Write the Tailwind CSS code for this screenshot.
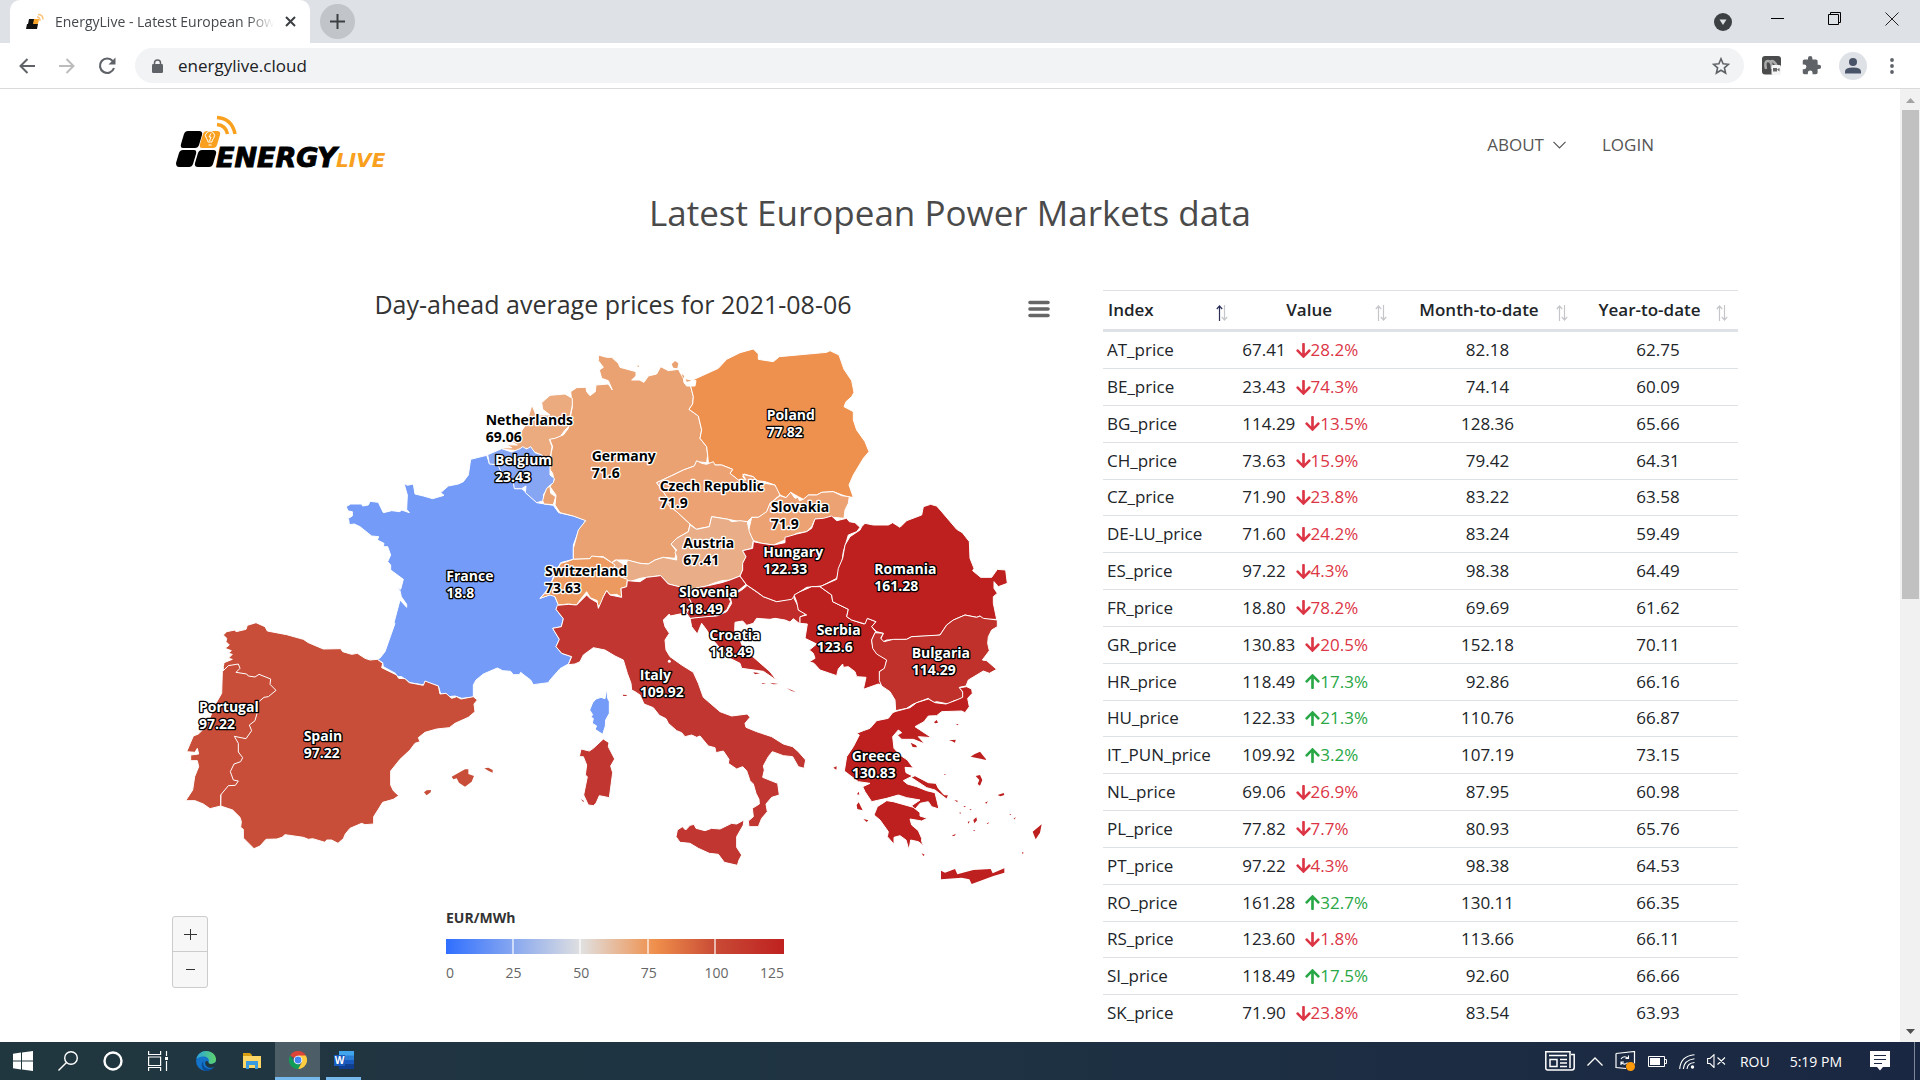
<!DOCTYPE html>
<html lang="en">
  <head>
    <meta charset="UTF-8" />
    <meta name="viewport" content="width=device-width, initial-scale=1.0" />
    <title>EnergyLive - Latest European Power Markets data</title>
    <script src="https://cdn.jsdelivr.net/npm/@tailwindcss/browser@4"></script>
  </head>
  <body
    class="h-screen flex flex-col overflow-hidden bg-white font-['Open_Sans',sans-serif] text-[#212529]"
  >
    <!-- Tab strip -->
    <div class="h-[43px] shrink-0 bg-[#dee1e6] flex items-center pl-[10px]">
      <div class="w-[300px] h-full bg-white rounded-t-[10px] flex items-center pl-4 pr-3">
        <svg class="w-[18px] h-[18px] shrink-0" viewBox="0 0 18 18">
          <path d="M3 6h6l-1 5H2zM1 11h5l-1 5H0zM6 11h6l-1 5H5z" fill="#111" />
          <path d="M8 6h5l-1 5H7z" fill="#f9a42a" />
          <path d="M11 4q3 0 3 4M12 1.500q5 0 5 5" fill="none" stroke="#fbc57a" stroke-width="1.500" />
        </svg>
        <span
          class="ml-[11px] mr-2 flex-1 text-[14px] whitespace-nowrap overflow-hidden [mask-image:linear-gradient(to_right,black_88%,transparent)] text-[#45494d]"
          >EnergyLive - Latest European Power Markets</span
        >
        <button aria-label="Close tab" class="w-4 h-4 shrink-0 flex items-center justify-center">
          <svg class="w-[11px] h-[11px]" viewBox="0 0 11 11">
            <path d="M1 1l9 9M10 1l-9 9" stroke="#3c4043" stroke-width="2" />
          </svg>
        </button>
      </div>
      <button
        aria-label="New tab"
        class="ml-[10px] w-[35px] h-[35px] rounded-full bg-[#c1c4c9] flex items-center justify-center"
      >
        <svg class="w-[15px] h-[15px]" viewBox="0 0 15 15">
          <path d="M7.500 0v15M0 7.500h15" stroke="#3c4043" stroke-width="2" />
        </svg>
      </button>
      <div class="ml-auto flex items-center h-full">
        <button aria-label="Search tabs" class="w-[36px] flex justify-center">
          <svg class="w-[18px] h-[18px]" viewBox="0 0 18 18">
            <circle cx="9" cy="9" r="9" fill="#3c4043" />
            <path d="M5.500 6.500h7L9 12z" fill="#dee1e6" />
          </svg>
        </button>
        <button aria-label="Minimize" class="ml-2 w-[57px] h-[37px] self-start flex items-center justify-center">
          <svg class="w-[13px] h-[13px]" viewBox="0 0 13 13">
            <path d="M0 6.500h13" stroke="#000" />
          </svg>
        </button>
        <button aria-label="Restore" class="w-[57px] h-[37px] self-start flex items-center justify-center">
          <svg class="w-[13px] h-[13px]" viewBox="0 0 13 13">
            <path d="M.5 2.500h10v10H.5zM2.500 2.500v-2h10v10h-2" fill="none" stroke="#000" />
          </svg>
        </button>
        <button aria-label="Close" class="w-[57px] h-[37px] self-start flex items-center justify-center">
          <svg class="w-[14px] h-[14px]" viewBox="0 0 14 14">
            <path d="M.5.5l13 13M13.500.5l-13 13" stroke="#222" />
          </svg>
        </button>
      </div>
    </div>

    <!-- Toolbar -->
    <div class="h-[46px] shrink-0 border-b border-[#d9dadc] flex items-center pl-[7px] pr-[18px]">
      <button aria-label="Back" class="w-10 flex justify-center">
        <svg class="w-4 h-4" viewBox="0 0 16 16" fill="none" stroke="#5f6368" stroke-width="2">
          <path d="M16 8H1.500M8.500 1L1.500 8l7 7" />
        </svg>
      </button>
      <button aria-label="Forward" class="w-10 flex justify-center">
        <svg class="w-4 h-4" viewBox="0 0 16 16" fill="none" stroke="#babcbe" stroke-width="2">
          <path d="M0 8h14.500M7.500 1l7 7-7 7" />
        </svg>
      </button>
      <button aria-label="Reload" class="w-10 flex justify-center">
        <svg class="w-[18px] h-[18px]" viewBox="0 0 18 18">
          <path d="M14.800 4.200A7.200 7.200 0 1 0 16 11" fill="none" stroke="#5f6368" stroke-width="2.100" />
          <path d="M17.500.5v7h-7z" fill="#5f6368" />
        </svg>
      </button>
      <div class="ml-2 flex-1 h-[35px] rounded-full bg-[#f1f3f4] flex items-center pl-[17px] pr-[14px]">
        <svg class="w-[11px] h-[14px]" viewBox="0 0 11 14">
          <path d="M2.500 6V4a3 3 0 0 1 6 0v2" fill="none" stroke="#5f6368" stroke-width="1.500" />
          <rect y="5" width="11" height="9" rx="1.200" fill="#5f6368" />
        </svg>
        <input
          type="text"
          aria-label="Address"
          value="energylive.cloud"
          class="ml-[15px] flex-1 bg-transparent text-[17px] text-[#202124] outline-none"
        />
        <button aria-label="Bookmark this page">
          <svg class="w-[18px] h-[18px]" viewBox="0 0 18 18">
            <path
              d="M9 1.800l2.100 5 5.300.5-4 3.500 1.200 5.200L9 13.300 4.400 16l1.200-5.200-4-3.500 5.300-.5z"
              fill="none"
              stroke="#5f6368"
              stroke-width="1.600"
            />
          </svg>
        </button>
      </div>
      <button aria-label="Recorder extension" class="ml-[18px]">
        <svg class="w-[19px] h-[19px]" viewBox="0 0 19 19">
          <rect width="19" height="18.500" rx="3" fill="#4a4b4c" />
          <path d="M4 13Q2 5 6 5t4 8M8 6q2-2 4 0t3 4" fill="none" stroke="#aaa" stroke-width="2.500" />
          <rect x="9.500" y="9" width="9.500" height="10" rx="1.500" fill="#f5f5f5" />
          <path d="M11 12h4v3.500h-4zM15 13.500l2.500-1.500v3.500z" fill="#666" />
        </svg>
      </button>
      <button aria-label="Extensions" class="ml-[20px]">
        <svg class="w-[21px] h-[21px]" viewBox="0 0 24 24">
          <path
            fill="#5f6368"
            d="M20.500 11H19V7c0-1.100-.9-2-2-2h-4V3.500a2.500 2.500 0 0 0-5 0V5H4c-1.100 0-2 .9-2 2v3.800h1.500a2.700 2.700 0 0 1 0 5.400H2V20c0 1.100.9 2 2 2h3.800v-1.500a2.700 2.700 0 0 1 5.400 0V22H17c1.100 0 2-.9 2-2v-4h1.500a2.500 2.500 0 0 0 0-5z"
          />
        </svg>
      </button>
      <button aria-label="Profile" class="ml-[17px]">
        <svg class="w-7 h-7" viewBox="0 0 28 28">
          <circle cx="14" cy="14" r="14" fill="#dee1e6" />
          <circle cx="14" cy="10" r="4" fill="#4a5468" />
          <path d="M6 21.500v-2q0-4 8-4t8 4v2z" fill="#4a5468" />
        </svg>
      </button>
      <button aria-label="Menu" class="ml-[15px] w-[20px] flex justify-center">
        <svg class="w-1 h-4" viewBox="0 0 4 16" fill="#5f6368">
          <circle cx="2" cy="2" r="1.900" />
          <circle cx="2" cy="8" r="1.900" />
          <circle cx="2" cy="14" r="1.900" />
        </svg>
      </button>
    </div>

    <div class="flex-1 min-h-0 flex">
      <main class="flex-1 min-w-0 overflow-hidden">
        <div class="max-w-[1576px] mx-auto">
          <header class="flex items-center justify-between pt-[25px] pl-[14px] pr-[84px]">
            <a href="#" aria-label="EnergyLive home">
              <svg class="w-[216px] h-[56px]" viewBox="0 0 216 56">
                <g fill="#000">
                  <path d="M12 17h11q4 0 3 4l-3 10q-1 3-4 3H7q-3 0-2-4l3-10q1-3 4-3z" />
                  <path d="M7 36h11q3 0 2 4l-3 10q-1 3-4 3H3q-3 0-3-4l3-10q1-3 4-3z" />
                  <path d="M26 36h11q4 0 3 4l-3 10q-1 3-4 3H22q-4 0-3-4l3-10q1-3 4-3z" />
                </g>
                <path d="M31 17h10q4 0 3 4l-3 10q-1 3-4 3H26q-3 0-2-4l3-10q1-3 4-3z" fill="#f9a11f" />
                <path
                  d="M32 28q0-2-1.500-3.500a4.500 4.500 0 1 1 7 0Q36 26 36 28zM32.500 31h3M35 19.500l-2 3.500h2l-1.500 4"
                  fill="none"
                  stroke="#fff"
                  stroke-width="1"
                />
                <path d="M41 3.500q15 1 18 16.500M41 10.500q9 1 10.500 9.500" fill="none" stroke="#f9a11f" stroke-width="3.500" />
                <text x="40" y="53" class="font-['DejaVu_Sans'] font-bold italic text-[27px]" stroke="#000">ENERGY</text>
                <text x="160" y="53" fill="#f9a11f" class="font-['DejaVu_Sans'] font-bold italic text-[20px]">LIVE</text>
              </svg>
            </a>
            <nav class="pt-[6px] flex items-center gap-[36px] text-[17px] leading-6 font-medium text-[#555]">
              <a href="#" class="flex items-center gap-[9px]"
                >ABOUT
                <svg class="w-[13px] h-2" viewBox="0 0 13 8">
                  <path d="M.5.8l6 6 6-6" fill="none" stroke="#555" stroke-width="1.200" />
                </svg>
              </a>
              <a href="#">LOGIN</a>
            </nav>
          </header>

          <h1 class="mt-[19px] text-center text-[35px] leading-[48px] text-[#4a4a4a]">
            Latest European Power Markets data
          </h1>

          <div class="mt-[53px] grid grid-cols-[906fr_635fr] gap-[35px]">
            <section class="pb-8">
              <div class="flex items-start">
                <h2 class="flex-1 pl-[36px] text-center text-[25px] leading-[28px] text-[#333]">
                  Day-ahead average prices for 2021-08-06
                </h2>
                <button aria-label="Chart context menu" class="mr-[18px] mt-[10px]">
                  <svg class="w-[22px] h-[18px]" viewBox="0 0 22 18">
                    <path d="M2 2.500h18M2 9h18M2 15.500h18" stroke="#666" stroke-width="3.600" stroke-linecap="round" />
                  </svg>
                </button>
              </div>

              <svg id="map" class="mt-3 w-full" viewBox="6 0 2718 1710" role="img" aria-label="Day-ahead prices by country">
                <g stroke="#fff" stroke-width="3" stroke-linejoin="round">
                  <!-- France, Corsica -->
                  <path fill="#739bf7" transform="translate(480 150)" d="M452 238L500 226 508 250 535 256 560 290 585 310 585 326 605 326 616 335 650 368 700 376 716 398 760 408 798 420 775 455 760 495 760 538 722 548 700 590 690 620 660 655 700 640 716 676 708 688 730 716 724 740 698 745 718 778 708 800 725 820 755 830 745 852 720 866 690 900 685 908 640 914 632 900 612 885 602 877 598 884 580 884 572 874 548 872 532 864 490 882 468 900 460 915 460 952 425 955 405 948 385 950 380 942 362 942 355 918 315 905 312 915 270 908 245 890 232 890 226 880 190 860 188 848 172 838 180 834 195 815 225 730 222 728 240 660 260 682 260 673 244 650 240 632 232 622 242 628 250 598 212 570 212 555 203 545 212 525 203 500 190 500 192 490 172 480 176 470 155 468 120 440 103 432 88 434 86 418 80 418 97 408 97 395 85 393 78 380 92 372 125 372 128 378 145 375 150 364 175 367 190 398 215 392 240 395 245 390 268 398 260 388 262 345 252 310 262 316 280 312 285 342 310 348 338 356 372 346 362 338 385 318 415 312 430 305 445 285Z" />
                  <path fill="#739bf7" transform="translate(1140 930)" d="M200 146L203 175 208 185 208 220 197 240 196 258 188 283 165 268 170 258 157 250 160 235 152 232 158 224 149 210 158 188 168 177 183 172 195 176Z" />
                  <!-- Spain, Portugal -->
                  <path fill="#c84e39" transform="translate(0 810)" d="M190 105L200 95 225 90 228 95 258 88 262 76 288 68 315 80 322 93 380 104 430 118 445 128 490 147 542 146 548 155 575 163 592 160 615 175 630 180 652 178 668 190 665 203 710 225 716 235 735 236 748 248 790 256 795 243 835 258 840 282 858 280 875 295 890 290 903 297 940 290 952 300 942 312 945 335 925 352 885 370 868 383 830 387 795 397 775 413 780 425 765 430 750 450 720 478 692 513 692 555 700 572 716 587 700 598 668 607 655 628 641 650 641 672 615 674 605 670 570 685 556 702 550 716 534 730 515 720 500 720 495 727 458 716 445 718 430 712 375 704 366 712 350 717 318 718 300 738 282 746 250 714 250 688 242 682 244 665 240 652 218 630 182 618 190 200 192 188 217 178 205 175 217 163 205 160 214 152 195 145 208 135 198 125 200 115Z" />
                  <path fill="#c84e39" transform="translate(0 810)" d="M187 215L205 197 235 192 240 205 228 217 260 222 265 228 285 231 297 223 332 237 330 253 348 271 325 290 312 292 293 308 291 340 285 362 268 375 275 392 258 416 223 409 235 430 235 456 248 473 242 485 222 492 211 515 220 540 235 543 226 556 205 557 182 585 182 618 150 626 130 612 105 602 77 602 98 570 104 530 116 500 112 482 92 482 92 465 116 462 112 445 105 457 80 455 100 408 115 402 140 378 165 315 185 280Z" />
                  <!-- Germany -->
                  <path fill="#eba272" transform="translate(1140 0)" d="M175 75L200 82 215 82 235 100 240 112 288 125 288 138 275 150 298 150 312 157 325 138 350 132 362 110 385 122 415 118 430 145 432 158 440 168 452 168 460 200 458 222 447 238 475 258 485 300 480 325 500 350 503 375 500 398 470 395 463 408 430 420 395 437 350 458 380 500 385 525 410 545 450 582 445 605 410 625 393 642 410 665 405 685 370 682 345 690 325 702 300 700 260 690 225 690 215 698 190 680 155 680 150 686 100 688 100 655 115 600 137 572 100 558 60 548 45 525 48 495 30 470 42 450 38 430 25 412 33 395 33 370 38 350 28 325 48 322 70 315 85 295 97 230 92 185 110 173 138 172 140 185 150 197 166 185 168 165 205 162 217 180 212 168 205 152 185 145 178 120 190 112 175 92Z" />
                  <!-- Netherlands, Belgium, Luxembourg -->
                  <path fill="#ecaa7f" transform="translate(480 150)" d="M625 110L636 75 648 105 690 105 668 88 665 68 690 46 735 42 757 55 757 75 750 110 746 140 735 150 722 168 705 175 688 178 696 200 692 225 685 235 692 262 668 262 665 225 640 215 620 205 590 212 550 208 548 204 575 203 560 194 592 195 578 188 600 160 620 130Z" />
                  <path fill="#86a6f4" transform="translate(480 150)" d="M503 224L545 206 575 216 600 206 608 200 620 207 632 200 645 218 665 225 682 240 690 262 690 285 703 295 700 308 685 320 670 345 672 362 650 368 616 338 618 318 605 326 583 326 580 308 550 290 537 262 535 254 508 252Z" />
                  <path fill="#eba272" transform="translate(480 150)" d="M672 345L680 325 690 318 692 340 707 350 700 374 672 372 668 362Z" />
                  <!-- Poland, Czech Republic, Slovakia, Austria, Switzerland -->
                  <path fill="#ee914f" transform="translate(1140 0)" d="M458 150L535 115 560 88 600 68 640 57 655 72 655 88 700 95 718 80 860 67 870 62 897 75 912 118 935 152 942 187 935 200 918 215 912 230 940 245 940 270 950 300 975 335 987 365 970 385 940 435 927 465 940 502 920 500 880 485 845 487 830 495 805 495 790 508 775 500 752 487 738 503 720 495 707 478 705 465 675 455 650 452 640 440 612 432 608 440 618 452 600 455 570 430 578 418 545 405 520 405 505 398 503 375 500 350 480 325 485 300 475 258 447 238 458 222 460 200 452 168 465 168 468 152Z" />
                  <path fill="#eca273" transform="translate(1140 0)" d="M350 458L395 437 430 420 463 408 470 392 485 400 500 403 520 395 525 405 545 405 578 418 570 430 595 450 618 450 608 433 640 440 650 452 675 460 705 465 720 495 690 520 680 548 655 562 635 562 622 575 600 575 565 568 515 560 508 590 480 595 470 598 450 582 410 545 385 525 380 500Z" />
                  <path fill="#eca273" transform="translate(1140 0)" d="M720 497L738 503 752 487 765 505 775 502 778 512 790 508 805 495 830 495 845 487 880 485 905 497 928 500 925 520 915 540 912 565 880 562 870 565 825 567 815 590 800 605 770 610 735 630 700 645 665 640 640 632 625 605 632 575 635 562 655 562 680 545 690 520Z" />
                  <path fill="#e9ae87" transform="translate(1140 0)" d="M450 585L470 598 508 590 515 560 565 568 575 575 600 572 622 575 628 605 640 632 635 655 608 662 618 680 608 700 608 720 600 738 570 750 545 752 520 760 500 768 450 778 385 762 362 737 320 742 300 745 270 755 240 745 218 715 215 698 230 690 245 700 258 710 262 690 300 700 325 702 345 690 370 682 410 690 410 680 405 668 410 660 393 642 410 625 445 605Z" />
                  <path fill="#ed9a61" transform="translate(1140 0)" d="M62 700L80 695 100 688 150 686 155 678 190 682 215 698 225 705 220 718 240 740 262 748 260 770 243 775 245 802 230 793 210 795 200 782 190 800 182 832 172 825 172 812 150 803 140 785 120 810 110 825 85 822 55 825 45 800 30 795 0 805 15 790 30 765 45 735Z" />
                  <!-- Italy, Sardinia, Sicily -->
                  <path fill="#c13630" transform="translate(1140 930)" d="M85 74L95 50 65 40 48 20 58 -2 38 -35 64 -40 70 -64 48 -92 52 -104 85 -107 110 -105 140 -135 150 -125 172 -112 175 -95 190 -130 200 -148 210 -135 245 -128 243 -155 260 -160 262 -178 300 -175 320 -188 362 -193 385 -168 450 -152 440 -140 455 -110 440 -90 450 -75 430 -80 390 -72 388 -78 370 -60 375 -40 388 -20 375 0 378 30 390 50 425 75 460 97 475 130 490 172 540 215 575 228 622 222 630 232 615 250 618 262 650 275 695 290 730 312 758 320 775 335 797 360 792 385 775 380 758 350 730 347 697 335 685 350 670 378 673 390 668 412 713 430 718 465 695 472 678 492 682 515 665 535 655 560 627 560 625 543 640 530 637 505 658 492 657 478 648 460 640 432 630 422 620 392 608 380 590 387 565 370 567 358 550 333 528 338 525 323 505 318 480 288 470 292 455 285 435 290 425 278 410 272 385 250 378 236 358 226 340 203 312 192 300 165 285 155 275 150 273 130 262 100 250 60 225 48 195 30 160 23 130 45 120 65 105 72Z" />
                  <path fill="#c13630" transform="translate(1140 930)" d="M190 297L207 308 205 320 224 357 212 378 218 398 208 473 178 467 168 490 160 497 145 495 131 465 142 410 136 405 140 375 130 350 118 350 123 327 148 333 160 325Z" />
                  <path fill="#c13630" transform="translate(1140 930)" d="M408 590L412 570 427 560 437 570 450 556 462 553 468 565 495 572 515 565 540 567 575 550 590 552 612 540 610 555 590 590 590 622 605 645 597 660 592 676 553 667 535 643 508 640 475 625 450 610 420 607Z" />
                  <!-- Slovenia, Croatia, Hungary -->
                  <path fill="#bf2c29" transform="translate(1140 0)" d="M600 738L620 765 670 800 710 815 755 805 765 790 762 805 775 830 775 840 798 852 780 862 780 882 760 866 750 876 735 870 705 865 690 868 650 865 640 880 620 886 608 873 585 877 584 905 600 930 610 955 650 990 690 1025 710 1051 670 1024 605 1015 600 1000 570 985 540 955 515 925 500 900 485 880 472 912 455 890 450 865 480 860 530 858 560 845 575 820 570 800 605 780 620 768Z" />
                  <path fill="#bf2c29" transform="translate(1140 0)" d="M450 778L500 768 545 758 570 750 600 738 618 763 600 778 565 800 572 815 560 840 545 850 520 858 480 862 450 865 440 850 455 820 440 790Z" />
                  <path fill="#be2321" transform="translate(1140 0)" d="M640 635L665 640 700 645 735 638 735 622 770 612 800 605 815 595 825 567 850 565 875 558 890 572 920 565 928 575 945 578 960 592 950 605 925 615 910 665 905 700 890 745 845 768 800 772 765 795 755 808 710 815 670 800 650 785 620 765 600 738 608 720 608 700 618 680 608 662 638 655Z" />
                  <!-- Serbia, Romania, Bulgaria -->
                  <path fill="#bd211f" transform="translate(1680 450)" d="M222 345L240 335 275 320 300 320 335 345 338 365 385 388 380 410 395 420 432 432 442 415 468 425 455 440 467 455 455 480 458 500 500 540 495 565 478 575 485 615 475 612 430 628 438 592 410 590 405 575 385 560 370 562 368 552 355 567 350 587 300 570 282 550 268 545 285 535 280 520 268 510 290 492 255 475 262 432 240 430 240 410 260 405 235 390 230 365Z" />
                  <path fill="#bd201e" transform="translate(1680 450)" d="M425 140L435 130 460 135 505 135 518 128 540 142 560 122 605 105 610 80 632 73 650 78 665 95 710 148 727 158 748 185 750 235 762 265 758 272 782 292 815 292 832 268 857 270 862 310 835 320 822 305 822 325 832 340 820 350 820 370 830 418 790 418 780 408 770 412 735 405 700 420 680 435 660 465 640 468 575 470 560 478 500 480 490 485 482 478 490 460 470 455 455 440 468 425 442 415 435 432 395 420 380 410 385 388 338 365 335 345 300 320 350 298 355 265 368 235 375 195 390 170 420 150Z" />
                  <path fill="#c1312b" transform="translate(1680 450)" d="M490 460L482 475 492 485 520 478 560 478 575 470 660 465 680 435 700 420 735 405 770 412 780 408 790 415 832 420 832 440 815 450 805 470 803 490 808 512 787 540 800 542 830 568 808 580 790 573 745 600 738 618 718 622 730 640 728 655 700 663 685 672 650 665 640 668 625 655 580 672 560 685 527 692 525 660 510 635 485 618 478 602 478 575 493 565 500 540 470 522 458 505 455 480 465 458Z" />
                  <!-- Greece, Euboea, Peloponnese, Crete -->
                  <path fill="#bd201e" transform="translate(1980 930)" d="M218 218L228 214 270 203 290 188 325 177 345 188 378 192 410 180 428 172 428 155 418 143 440 140 455 147 457 160 443 175 448 200 435 218 425 213 365 215 350 227 325 228 312 245 285 260 335 293 295 290 315 312 280 298 245 298 232 285 245 278 235 270 218 290 222 325 240 345 262 360 280 384 255 382 258 398 278 408 250 422 262 432 290 440 320 452 345 458 357 507 335 500 325 485 300 490 285 508 275 497 300 480 260 473 235 465 200 475 155 485 135 455 128 440 150 430 115 425 73 393 80 350 100 320 118 285 110 280 130 272 150 265 170 242 205 235Z" />
                  <path fill="#bd201e" transform="translate(1980 930)" d="M200 482L220 485 280 502 300 518 300 528 322 535 305 543 270 537 275 555 295 572 305 595 305 605 312 618 295 605 272 600 267 630 258 600 240 587 222 592 222 613 202 590 205 575 180 540 162 525 172 500Z" />
                  <path fill="#bd201e" transform="translate(1980 930)" d="M273 412L285 407 325 428 348 430 355 445 372 464 386 465 380 477 345 450 320 443Z" />
                </g>
                <!-- Small islands, drawn without an outline -->
                <path fill="#c84e39" transform="translate(0 810)" d="M875 530L915 508 925 508 925 522 942 528 935 545 915 560 897 548 890 535 880 538ZM973 505L985 503 998 510 998 518 985 512ZM792 577L800 571 813 570 812 577 800 586Z" />
                <path fill="#eba272" transform="translate(1140 0)" d="M395 103L405 93 415 100 412 115 400 113ZM425 132L433 138 430 145ZM437 148L455 152 440 155ZM292 106L298 108 294 112Z" />
                <path fill="#bf2c29" transform="translate(1140 930)" d="M640 97L660 100 645 103ZM740 144L768 156 755 153ZM665 129L678 130 668 132ZM690 128L715 132 700 133ZM498 -50L512 -42 520 -28 508 -34Z" />
                <path fill="#c13630" transform="translate(1140 930)" d="M248 164L262 165 258 168 250 168ZM122 477L132 483 130 486Z" />
                <circle cx="1528" cy="994" r="4.500" fill="#fff" />
                <path fill="#bd201e" transform="translate(1980 930)" d="M363 692L375 698 405 687 412 703 460 690 512 687 518 700 553 685 553 698 520 708 455 732 448 718 425 713 363 718ZM452 350L463 343 480 335 500 360ZM467 408L480 405 487 420 480 437 473 432 478 420ZM638 575L665 553 660 578 647 598ZM387 301L407 299 405 308 397 304ZM342 247L350 240 354 248 346 250ZM272 308L288 316 291 322 278 321ZM533 465L551 459 553 465 541 469ZM40 383L50 379 49 389ZM110 495L116 487 128 511 112 507ZM130 537L145 541 140 546ZM460 540L469 532 471 541 463 550ZM395 587L408 581 403 588ZM403 480L413 482 412 487ZM111 463L116 455 118 464ZM305 640L314 644 310 648ZM495 488L504 484 499 491ZM443 546L449 543 446 551ZM408 252L416 253 412 256ZM460 570L466 571 462 574ZM418 518L422 517 421 523ZM430 498L438 499 434 502ZM448 508L455 508 452 511ZM580 537L588 531 584 538ZM500 551L507 546 504 552ZM606 636L611 638 608 643ZM372 402L378 403 374 405ZM568 523L574 523 571 526Z" />
                <g
                  id="labels"
                  class="font-['Open_Sans'] font-bold text-[42px]"
                  stroke-width="8"
                  stroke-linejoin="round"
                  paint-order="stroke"
                ></g>
              </svg>

              <div class="mt-2 flex items-end pl-[10px]">
                <div class="flex flex-col border border-[#ccc] rounded-[3px] bg-[#f7f7f7] divide-y divide-[#ccc] mb-[11px]">
                  <button aria-label="Zoom in" class="w-[34px] h-[35px] flex items-center justify-center">
                    <svg class="w-[13px] h-[13px]" viewBox="0 0 13 13"><path d="M6.500 1v11M0 6.500h13" stroke="#333" /></svg>
                  </button>
                  <button aria-label="Zoom out" class="w-[34px] h-[35px] flex items-center justify-center">
                    <svg class="w-[13px] h-[13px]" viewBox="0 0 13 13"><path d="M2 6.500h9" stroke="#333" /></svg>
                  </button>
                </div>
                <div class="ml-[238px] w-[338px] mb-[16px]">
                  <h3 class="text-[14px] leading-5 font-bold text-[#333]">EUR/MWh</h3>
                  <div
                    class="mt-[11px] h-[15px] grid grid-cols-5 divide-x-2 divide-white/60 bg-[linear-gradient(to_right,#2f6fff,#e0e0e0_40%,#ef8f4b_62%,#c84a35_80%,#bf2120)]"
                  >
                    <div></div>
                    <div></div>
                    <div></div>
                    <div></div>
                    <div></div>
                  </div>
                  <div class="mt-[9px] grid grid-cols-5 text-[14px] leading-5 text-[#666]">
                    <span class="flex justify-between"><span>0</span><span class="-mr-2">25</span></span>
                    <span class="text-right -mr-2">50</span>
                    <span class="text-right -mr-2">75</span>
                    <span class="text-right -mr-3">100</span>
                    <span class="text-right">125</span>
                  </div>
                </div>
              </div>
            </section>

            <table class="w-full h-full table-fixed border-collapse text-[17px] leading-5">
              <colgroup>
                <col class="w-[21.3%]" />
                <col class="w-[25%]" />
                <col class="w-[28.500%]" />
                <col class="w-[25.200%]" />
              </colgroup>
              <thead>
                <tr id="headings" class="border-t border-b-[3px] border-[#dee2e6]"></tr>
              </thead>
              <tbody id="prices"></tbody>
            </table>
          </div>
        </div>
      </main>

      <!-- Page scrollbar -->
      <div class="w-5 shrink-0 bg-[#f1f1f1] flex flex-col items-center">
        <svg class="w-[9px] h-[21px]" viewBox="0 0 9 21"><path d="M0 14l4.500-5L9 14z" fill="#a3a3a3" /></svg>
        <div class="w-[17px] h-[489px] bg-[#c1c1c1]"></div>
        <svg class="w-[9px] h-[21px] mt-auto" viewBox="0 0 9 21"><path d="M0 8l4.500 5L9 8z" fill="#505050" /></svg>
      </div>
    </div>

    <!-- Taskbar -->
    <footer
      class="h-[38px] shrink-0 flex items-center bg-linear-to-r from-[#21373f] via-[#1e3243] to-[#1a2742] text-white"
    >
      <button aria-label="Start" class="w-[45px] flex justify-center">
        <svg class="w-5 h-5" viewBox="0 0 20 20" fill="#fff">
          <path d="M0 2.700l8-1.100v7.900H0zM9 1.400L20 0v9.500H9zM0 10.500h8v7.900l-8-1.100zM9 10.500h11V20L9 18.600z" />
        </svg>
      </button>
      <button aria-label="Search" class="w-[45px] flex justify-center">
        <svg class="w-5 h-5" viewBox="0 0 20 20" fill="none" stroke="#fff" stroke-width="1.400">
          <circle cx="13" cy="7" r="6.300" />
          <path d="M8.500 11.500L.5 19.500" />
        </svg>
      </button>
      <button aria-label="Cortana" class="w-[45px] flex justify-center">
        <svg class="w-5 h-5" viewBox="0 0 20 20"><circle cx="10" cy="10" r="8.500" fill="none" stroke="#fff" stroke-width="2.400" /></svg>
      </button>
      <button aria-label="Task View" class="w-[45px] flex justify-center">
        <svg class="w-5 h-5" viewBox="0 0 20 20" fill="none" stroke="#fff" stroke-width="1.200">
          <path d="M.6 0v3.500h12V0M.6 20v-3.500h12V20M.6 6h12v8.500H.6zM18.500 0v5M18.500 10v10" />
          <path d="M17 6h3v3h-3z" fill="#fff" stroke="none" />
        </svg>
      </button>
      <button aria-label="Microsoft Edge" class="ml-[3px] w-[46px] flex justify-center">
        <svg class="w-5 h-5" viewBox="0 0 20 20">
          <defs>
            <linearGradient id="edge-top"><stop stop-color="#2ba3dd" /><stop offset="1" stop-color="#5fd46a" /></linearGradient>
          </defs>
          <circle cx="10" cy="10" r="10" fill="#1273c8" />
          <path d="M.3 8C1.500 3 5.500 0 10 0c6 0 10 4 10 8.500 0 3-2.300 4.500-5 4.500-2 0-3-.8-2.500-1.800C14 8 11 5.500 7.500 5.500 4 5.500 1 7 .3 8z" fill="url(#edge-top)" />
          <path d="M7.500 10c-1.500 4 1.500 8 6 8 2 0 3.700-.7 4.700-1.700C16 19 13 20 10.500 20 6 19.500 4 13 7.500 10z" fill="#0b4a94" />
          <path d="M12.500 11c-.4 1 .6 2 2.500 2 2 0 4-1 5-2.500 0 2-.5 4-1.600 5.300-4 2.500-9.400.2-9.200-4 .2-2 1.700-2.500 3.300-.8z" fill="#21373f" />
        </svg>
      </button>
      <button aria-label="File Explorer" class="w-[46px] flex justify-center">
        <svg class="w-[18px] h-4" viewBox="0 0 18 16">
          <path d="M0 0h7l2 2v3H0z" fill="#d99f12" />
          <path d="M0 3h18v12H0z" fill="#ffd767" />
          <path d="M3 16V8h12v8h-3v-4H6v4z" fill="#3b9be0" />
        </svg>
      </button>
      <button
        aria-label="Google Chrome"
        class="w-[45px] h-full border-b-[3px] border-[#76b9ed] bg-white/20 flex items-center justify-center"
      >
        <svg class="w-[18px] h-[18px]" viewBox="0 0 18 18">
          <path d="M9 9L1.200 4.500A9 9 0 0 1 16.800 4.500z" fill="#db4437" />
          <path d="M9 4.500h7.800A9 9 0 0 1 9 18l4-7z" fill="#ffcd40" />
          <path d="M1.200 4.500L5 11.200 9 13.500h2.500L9 18A9 9 0 0 1 1.200 4.500z" fill="#0f9d58" />
          <circle cx="9" cy="9" r="4.300" fill="#fff" />
          <circle cx="9" cy="9" r="3.400" fill="#4285f4" />
        </svg>
      </button>
      <button
        aria-label="Word"
        class="ml-[6px] w-[35px] h-full border-b-[3px] border-[#76b9ed] flex items-center justify-center"
      >
        <svg class="w-5 h-[18px]" viewBox="0 0 20 18">
          <path d="M5 0h15v5H5z" fill="#41a5ee" />
          <path d="M5 4.500h15V9H5z" fill="#2b7cd3" />
          <path d="M5 9h15v4.500H5z" fill="#185abd" />
          <path d="M5 13.500h15V18H5z" fill="#103f91" />
          <path d="M0 4h11v11H0z" fill="#185abd" />
          <text x="5.500" y="13" text-anchor="middle" fill="#fff" class="font-['Open_Sans'] font-bold text-[10px]">W</text>
        </svg>
      </button>

      <div class="ml-auto flex items-center gap-3 pr-[5px] text-[14px]">
        <button aria-label="News and interests">
          <svg class="w-[30px] h-5" viewBox="0 0 30 20" fill="none" stroke="#fff" stroke-width="1.500">
            <path d="M25 17V.8H.8V17q0 2 2 2h24q2.400 0 2.400-2.500V3.500H26" />
            <path d="M4 4.500h18M15 8.500h7M15 12h7M15 15.500h7M5 8.500h7v7H5z" />
          </svg>
        </button>
        <button aria-label="Show hidden icons">
          <svg class="w-4 h-[9px]" viewBox="0 0 16 9"><path d="M.5 8.500L8 1l7.500 7.500" fill="none" stroke="#fff" stroke-width="1.300" /></svg>
        </button>
        <button aria-label="Windows Update">
          <svg class="w-[21px] h-5" viewBox="0 0 21 20" fill="none" stroke="#fff">
            <path d="M1 2.500L19.500.5v12M11 17.500L1 16.500v-14" stroke-width="1.200" />
            <path d="M6 8q2-3.500 6-1.500l1.500 1M13.500 4.500v3h-3M12.500 11.500q-2 2.500-5 1l-1.500-1M6 14v-3h3" stroke-width="1.100" />
            <circle cx="15.500" cy="15.500" r="4.500" fill="#ff9a0a" stroke="none" />
          </svg>
        </button>
        <button aria-label="Battery">
          <svg class="w-[19px] h-[11px]" viewBox="0 0 19 11">
            <path d="M.5.5h16v10H.5zM16.500 3.500h2v4h-2" fill="none" stroke="#fff" />
            <path d="M2 2h10v7H2z" fill="#fff" />
          </svg>
        </button>
        <button aria-label="Network">
          <svg class="w-4 h-[15px]" viewBox="0 0 16 15" fill="none" stroke="#fff" stroke-width="1.100">
            <path d="M.7 15Q1.500 2 15.500.7M4.300 15Q5 6 15.500 4.700M8 15q.5-6 7.500-6.500" />
            <circle cx="13.500" cy="13" r="1.700" fill="#fff" stroke="none" />
          </svg>
        </button>
        <button aria-label="Volume muted">
          <svg class="w-[19px] h-[14px]" viewBox="0 0 19 14" fill="none" stroke="#fff" stroke-width="1.100">
            <path d="M.6 4.500v5H3l4 4V.7l-4 3.800zM10.500 3.500l7.500 7M18 3.500l-7.500 7" />
          </svg>
        </button>
        <span class="ml-[2px]">ROU</span>
        <span class="ml-2">5:19 PM</span>
        <button aria-label="Notifications" class="ml-4">
          <svg class="w-5 h-5" viewBox="0 0 20 20">
            <path d="M0 0h20v16h-7l-3 3.500L7 16H0z" fill="#fff" />
            <path d="M4 4.500h12M4 8.500h12M4 12.500h8" stroke="#1a2742" stroke-width="1.100" />
          </svg>
        </button>
        <span class="ml-3 w-px h-[38px] bg-[#7d8797]"></span>
      </div>
    </footer>

    <script>
      const headings = ["Index", "Value", "Month-to-date", "Year-to-date"];

      // index, value, change in %, month-to-date, year-to-date
      const prices = [
        ["AT_price", "67.41", -28.2, "82.18", "62.75"],
        ["BE_price", "23.43", -74.3, "74.14", "60.09"],
        ["BG_price", "114.29", -13.5, "128.36", "65.66"],
        ["CH_price", "73.63", -15.9, "79.42", "64.31"],
        ["CZ_price", "71.90", -23.8, "83.22", "63.58"],
        ["DE-LU_price", "71.60", -24.2, "83.24", "59.49"],
        ["ES_price", "97.22", -4.3, "98.38", "64.49"],
        ["FR_price", "18.80", -78.2, "69.69", "61.62"],
        ["GR_price", "130.83", -20.5, "152.18", "70.11"],
        ["HR_price", "118.49", 17.3, "92.86", "66.16"],
        ["HU_price", "122.33", 21.3, "110.76", "66.87"],
        ["IT_PUN_price", "109.92", 3.2, "107.19", "73.15"],
        ["NL_price", "69.06", -26.9, "87.95", "60.98"],
        ["PL_price", "77.82", -7.7, "80.93", "65.76"],
        ["PT_price", "97.22", -4.3, "98.38", "64.53"],
        ["RO_price", "161.28", 32.7, "130.11", "66.35"],
        ["RS_price", "123.60", -1.8, "113.66", "66.11"],
        ["SI_price", "118.49", 17.5, "92.60", "66.66"],
        ["SK_price", "71.90", -23.8, "83.54", "63.93"],
      ];

      // name, value, x, y, dark text
      const labels = [
        ["Portugal", "97.22", 117, 1147],
        ["Spain", "97.22", 431, 1234],
        ["Netherlands", "69.06", 977, 286, true],
        ["Belgium", "23.43", 1005, 406],
        ["France", "18.8", 859, 754],
        ["Italy", "109.92", 1439, 1050],
        ["Switzerland", "73.63", 1155, 739, true],
        ["Germany", "71.6", 1295, 394, true],
        ["Poland", "77.82", 1820, 271],
        ["Czech Republic", "71.9", 1499, 484, true],
        ["Slovakia", "71.9", 1832, 545, true],
        ["Austria", "67.41", 1570, 655, true],
        ["Hungary", "122.33", 1810, 682],
        ["Slovenia", "118.49", 1557, 801],
        ["Croatia", "118.49", 1648, 931],
        ["Serbia", "123.6", 1970, 916],
        ["Romania", "161.28", 2143, 731],
        ["Bulgaria", "114.29", 2255, 983],
        ["Greece", "130.83", 2075, 1294],
      ];

      const arrow = (up) => `
        <svg class="${up ? "w-[15px] h-[17px] rotate-180" : "w-[15px] h-[17px]"}" viewBox="0 0 448 512" fill="currentColor">
          <path d="M413.100 222.500l22.200 22.200c9.400 9.400 9.400 24.600 0 33.900L241 473c-9.400 9.400-24.600 9.400-33.900 0L12.700 278.600c-9.400-9.400-9.400-24.600 0-33.900l22.200-22.200c9.500-9.500 25-9.300 34.300.4L184 343.400V56c0-13.300 10.700-24 24-24h32c13.300 0 24 10.700 24 24v287.400l114.800-120.500c9.300-9.800 24.800-10 34.300-.4z"/>
        </svg>`;

      document.getElementById("headings").innerHTML = headings
        .map(
          (title, i) => `
          <th class="p-0 font-semibold">
            <button class="w-full h-[38px] flex items-center pl-[5px] pr-[10px]">
              <span class="${i === 0 ? "flex-1 text-left" : "flex-1 text-center"}">${title}</span>
              <svg class="w-3 h-4 mt-[6px]" viewBox="0 0 12 16" fill="none">
                <path d="M3.500 16V1M.8 4l2.700-3 2.700 3" stroke="${i === 0 ? "#2b2f5a" : "#c4c6c9"}" stroke-width="1.200" />
                <path d="M8.500 0v15M5.800 12l2.700 3 2.700-3" stroke="#c4c6c9" stroke-width="1.200" />
              </svg>
            </button>
          </th>`
        )
        .join("");

      document.getElementById("prices").innerHTML = prices
        .map(
          ([index, value, change, month, year]) => `
          <tr class="border-b border-[#dee2e6] last:border-0">
            <td class="py-1 pl-1">${index}</td>
            <td class="py-1 pl-1">
              <div class="flex items-center gap-[10px]">
                <span>${value}</span>
                <span class="${change > 0 ? "flex items-center text-[#28a745]" : "flex items-center text-[#dc3545]"}">${arrow(change > 0)}${Math.abs(change)}%</span>
              </div>
            </td>
            <td class="py-1 text-center">${month}</td>
            <td class="py-1 text-center">${year}</td>
          </tr>`
        )
        .join("");

      document.getElementById("labels").innerHTML = labels
        .map(
          ([name, value, x, y, dark]) => `
          <text y="${y}" fill="${dark ? "#000" : "#fff"}" stroke="${dark ? "#fff" : "#000"}">
            <tspan x="${x}">${name}</tspan><tspan x="${x}" dy="51">${value}</tspan>
          </text>`
        )
        .join("");
    </script>
  </body>
</html>
